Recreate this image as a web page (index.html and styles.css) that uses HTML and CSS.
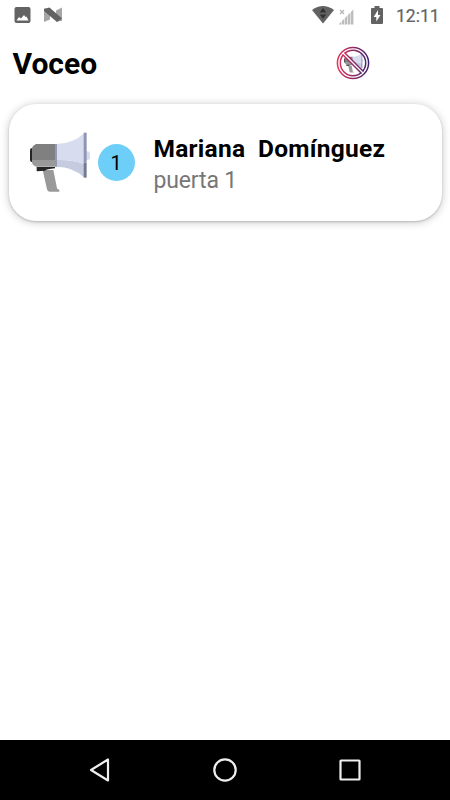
FILE: index.html
```html
<!DOCTYPE html>
<html lang="es">
<head>
<meta charset="utf-8">
<title>Voceo</title>
<link rel="stylesheet" href="styles.css">
</head>
<body>
<div class="screen">
  <div class="status">
    <svg class="picture" viewBox="0 0 16 16"><rect width="16" height="16" rx="2" fill="#636363"/><path d="M2 13.500 4.500 10l2 1.500 3-3.500 1.500 2 1-.5 2 4z" fill="#fff"/></svg>
    <svg class="nougat" viewBox="0 0 18 16"><path d="M0 1.500h6v11L0 15zM12 3.500 18 .5v13.500l-6 .5z" fill="#a6a6a6"/><path d="M0 2 5.500 .5 18 11.500l-5 3.500L0 4z" fill="#626262"/></svg>
    <svg class="wifi" viewBox="0 0 22 18"><path d="M0 4Q11-4 22 4L11 17.500z" fill="#626262"/><path d="m11 2 3.300 4.600H7.700zM11 12.800 7.700 8.500h6.600z" fill="#303030"/></svg>
    <svg class="signal" viewBox="0 0 15 16"><path d="m1 1 4 4m0-4L1 5" stroke="#b5b5b5" stroke-width="1.200"/><path d="M0 15.500V15l2.400-2.400v2.900zM3 15.500V12l2.400-2.400v5.900zM6 15.500V9l2.400-2.400v8.900zM9 15.500V6l2.400-2.400v11.900zM12 15.500V3l2.400-2.400v14.900z" fill="#bdbdbd"/></svg>
    <svg class="battery" viewBox="0 0 12 18"><path d="M3.500 0h5v2H11q1 0 1 1v14q0 1-1 1H1q-1 0-1-1V3q0-1 1-1h2.500z" fill="#626262"/><path d="M7 4 2.700 11h2.600v4.500L9.500 9H7z" fill="#fff"/></svg>
    <span class="clock">12:11</span>
  </div>
  <header class="bar">
    <h1 class="title">Voceo</h1>
    <svg class="mute" viewBox="0 0 34 34">
      <defs>
        <linearGradient id="ring" gradientUnits="userSpaceOnUse" x1="0" y1="0" x2="34" y2="0"><stop stop-color="#ef3158"/><stop offset="1" stop-color="#35226f"/></linearGradient>
      </defs>
      <svg x="8" y="7" width="19.500" height="20" viewBox="29 37 182 182" preserveAspectRatio="none"><use href="#horn"/></svg>
      <circle cx="17" cy="17" r="14.300" fill="none" stroke="#fff" stroke-width="3"/>
      <g fill="none" stroke="url(#ring)" stroke-width="1.500"><circle cx="17" cy="17" r="15.600"/><circle cx="17" cy="17" r="12.700"/></g>
      <path d="m7.500 7.500 19 19" stroke="url(#ring)" stroke-width="4"/>
      <path d="m7 7 20 20" stroke="#fff" stroke-width="1.200"/>
    </svg>
  </header>
  <main class="card">
    <svg class="megaphone" viewBox="0 0 240 240">
      <g id="horn">
        <rect x="194" y="94" width="16" height="26" rx="7" fill="#d7ddee"/>
        <path d="M38 84q-8 0-8 7v28q0 7 8 7z" fill="#252525"/>
        <path d="M48 72h58v48H36V84q2-8 12-12z" fill="#808080"/>
        <path d="M36 120h70v20H48q-9-2-12-11z" fill="#999"/>
        <path d="M110 72q50-1 82-32v80h-82z" fill="#d7ddee"/>
        <path d="M110 120q46-2 82 12v40q-34-32-82-32z" fill="#c6cce0"/>
        <path d="M110 119h82v14q-36-15-82-13z" fill="#d7ddee"/>
        <path d="M105 72h6v68h-6z" fill="#9299b5"/>
        <path d="M191 38h9v90h-9z" fill="#9097b4"/>
        <path d="M191 128h9v45h-9z" fill="#777b91"/>
        <path d="M68 150h32l11 55q1 4 7 4v6H89q-7 0-8-7z" fill="#999"/>
        <path d="M50 141h55v4q-25 2-30 7l-25 2z" fill="#252525"/>
      </g>
    </svg>
    <span class="badge">1</span>
    <div class="details">
      <div class="name">Mariana&nbsp; Domínguez</div>
      <div class="door">puerta 1</div>
    </div>
  </main>
  <nav class="nav">
    <svg viewBox="0 0 24 24"><path d="M20 1.500v21L3 12z"/></svg>
    <svg viewBox="0 0 24 24"><circle cx="12" cy="12" r="10.700"/></svg>
    <svg viewBox="0 0 24 24"><rect x="2.500" y="2.500" width="19" height="19" rx=".5"/></svg>
  </nav>
</div>
</body>
</html>
```
FILE: styles.css
```css
* { box-sizing: border-box; }
body { margin: 0; background: #fff; font-family: Roboto, sans-serif; }
svg { display: block; flex: none; }
.screen { width: 450px; height: 800px; display: flex; flex-direction: column; overflow: hidden; }
.status { height: 32px; display: flex; align-items: flex-start; padding: 7px 0 0 14px; }
.picture { width: 17px; height: 16px; }
.nougat { width: 18px; height: 16px; margin-left: 13px; }
.wifi { width: 22px; height: 18px; margin: -1px 0 0 250px; }
.signal { width: 15px; height: 16px; margin: 2px 0 0 5px; }
.battery { width: 12px; height: 18px; margin: -1px 0 0 17px; }
.clock { margin-left: 13px; font-size: 17.5px; line-height: 18px; color: #636363; -webkit-text-stroke: .2px #636363; }
.bar { height: 72px; display: flex; padding-left: 12.5px; }
.title { width: 323px; margin: 14px 0 0; font-size: 30px; line-height: 36px; font-weight: 700; color: #000; }
.mute { width: 34px; height: 34px; margin-top: 13.5px; }
.card { width: 433px; height: 117px; flex: none; margin-left: 8.5px; border-radius: 27px; background: #fff; display: flex; padding: 16px 0 0 11.5px; box-shadow: 0 1px 2px rgba(0,0,0,.16), 0 1px 8px rgba(0,0,0,.24); }
.megaphone { width: 80px; height: 80px; }
.badge { width: 37px; height: 37px; flex: none; margin: 24px 0 0 -2.5px; border-radius: 50%; background: #6dcff8; color: #000; text-align: center; font-size: 20px; line-height: 38px; }
.details { margin: 14px 0 0 19px; white-space: nowrap; }
.name { font-size: 24.5px; line-height: 30px; font-weight: 700; letter-spacing: .27px; color: #000; }
.door { margin-top: 2px; font-size: 23px; line-height: 30px; letter-spacing: -.15px; color: #777; }
.nav { height: 60px; flex: none; margin-top: auto; background: #000; display: flex; align-items: center; justify-content: center; gap: 101px; }
.nav svg { width: 24px; height: 24px; fill: none; stroke: #eee; stroke-width: 2.2; stroke-linejoin: round; }
```
